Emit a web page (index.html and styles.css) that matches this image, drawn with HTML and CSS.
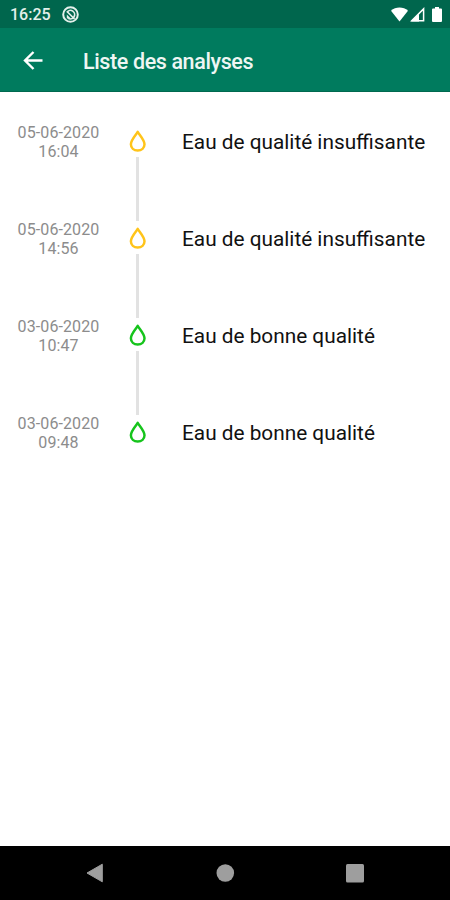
FILE: index.html
```html
<!DOCTYPE html>
<html lang="fr">
<head>
  <meta charset="UTF-8" />
  <meta name="viewport" content="width=device-width, initial-scale=1.0"/>
  <title>Liste des analyses</title>
  <link rel="stylesheet" href="styles.css">
</head>
<body>

  <!-- Status bar -->
  <div class="status-bar">
    <span class="clock">16:25</span>
    <svg class="app-icon" width="18" height="18" viewBox="0 0 18 18" fill="none" stroke="#e3f0eb">
      <circle cx="8.5" cy="8.5" r="7.3" stroke-width="2"/>
      <path d="M5 6.2A4.2 4.2 0 1 1 6.2 12.2" stroke-width="1.7"/>
      <path d="M5 5.5l7.5 7.5" stroke-width="1.7"/>
      <path d="M4.8 8.5v4h4z" fill="#e3f0eb" stroke="none"/>
    </svg>
    <div class="status-icons">
      <svg width="17" height="15" viewBox="0 0 17 15" fill="#fff">
        <path d="M0 3.8C4.6 -.6 12.4 -.6 17 3.8L8.5 14.4z"/>
      </svg>
      <svg width="15" height="15" viewBox="0 0 15 15">
        <path d="M1.7 13.8L13.6 1.9V13.8z" fill="none" stroke="#fff" stroke-width="1.5"/>
        <path d="M1 14.5L9 6.5V14.5z" fill="#fff"/>
      </svg>
      <svg class="battery" width="10" height="15" viewBox="0 0 10 15" fill="#fff">
        <path d="M3 0h4v1.6h2q1 0 1 1V14q0 1-1 1H1q-1 0-1-1V2.6q0-1 1-1h2z"/>
      </svg>
    </div>
  </div>

  <!-- App bar -->
  <header>
    <svg width="20" height="20" viewBox="0 0 20 20" fill="none" stroke="#fff" stroke-width="2.4">
      <path d="M19.5 10.5H2.5M10.5 2L2 10.5L10.5 19"/>
    </svg>
    <h1>Liste des analyses</h1>
  </header>

  <!-- Timeline -->
  <main>
    <svg class="symbols" width="0" height="0">
      <symbol id="drop" viewBox="0 0 18 24">
        <path d="M8.7 2.9C6.6 6.3 1.9 11 1.9 15.2C1.9 19 4.9 21.5 8.7 21.5S15.5 19 15.5 15.2C15.5 11 10.8 6.3 8.7 2.9z" fill="none" stroke="currentColor" stroke-width="2.5" stroke-linejoin="round"/>
      </symbol>
    </svg>
    <ul class="timeline">
      <li>
        <div class="date">05-06-2020<br>16:04</div>
        <div class="marker bad"><svg width="18" height="24"><use href="#drop"/></svg></div>
        <div class="label">Eau de qualité insuffisante</div>
      </li>
      <li>
        <div class="date">05-06-2020<br>14:56</div>
        <div class="marker bad"><svg width="18" height="24"><use href="#drop"/></svg></div>
        <div class="label">Eau de qualité insuffisante</div>
      </li>
      <li>
        <div class="date">03-06-2020<br>10:47</div>
        <div class="marker good"><svg width="18" height="24"><use href="#drop"/></svg></div>
        <div class="label">Eau de bonne qualité</div>
      </li>
      <li>
        <div class="date">03-06-2020<br>09:48</div>
        <div class="marker good"><svg width="18" height="24"><use href="#drop"/></svg></div>
        <div class="label">Eau de bonne qualité</div>
      </li>
    </ul>
  </main>

  <!-- Navigation bar -->
  <nav>
    <svg width="20" height="20" viewBox="0 0 20 20"><path d="M2 10L17.3 1.2V18.8z" stroke="#9e9e9e" stroke-width="1" stroke-linejoin="round"/></svg>
    <svg width="20" height="20" viewBox="0 0 20 20"><circle cx="10.3" cy="10" r="8.8"/></svg>
    <svg width="20" height="20" viewBox="0 0 20 20"><rect x="1" y="1" width="18" height="18.5" rx="1.5"/></svg>
  </nav>

</body>
</html>
```
FILE: styles.css
```css
:root {
  --primary: #007b5e;
  --primary-dark: #00664d;
  --bad: #ffc41a;
  --good: #16c41c;
}

body {
  margin: 0;
  font-family: Roboto, sans-serif;
  background: #fff;
  display: flex;
  flex-direction: column;
  height: 100vh;
}

.status-bar {
  display: flex;
  align-items: center;
  height: 28px;
  box-sizing: border-box;
  padding: 1px 8px 0 10px;
  background: var(--primary-dark);
}

.clock {
  width: 52px;
  font-size: 16px;
  font-weight: 500;
  line-height: 28px;
  padding-top: 1px;
  color: #e3f0eb;
}

.status-icons {
  display: flex;
  margin-left: auto;
  gap: 2px;
}

.battery {
  margin-left: 5px;
}

header {
  display: flex;
  align-items: center;
  height: 64px;
  box-sizing: border-box;
  padding: 0 23px;
  gap: 40px;
  background: var(--primary);
  border-bottom: 1px solid #00694f;
}

header h1 {
  margin: 0;
  padding-top: 3px;
  font-size: 21.5px;
  font-weight: 500;
  letter-spacing: -0.38px;
  color: #eef6f3;
}

main {
  flex-grow: 1;
}

.symbols {
  display: block;
}

.timeline {
  list-style: none;
  margin: 0;
  padding: 32px 0 0;
}

.timeline li {
  display: grid;
  grid-template-columns: 117px 41px 1fr;
  height: 97px;
}

.date {
  margin-top: -1px;
  font-size: 16px;
  line-height: 19px;
  letter-spacing: 0.1px;
  text-align: center;
  color: #8c8c8c;
}

.marker {
  display: flex;
  flex-direction: column;
  align-items: center;
}

.marker svg {
  margin: 5px 0 4px;
  flex-shrink: 0;
}

.marker::after {
  content: "";
  width: 3px;
  height: 64px;
  background: #e2e2e2;
}

.timeline li:last-child .marker::after {
  display: none;
}

.bad {
  color: var(--bad);
}

.good {
  color: var(--good);
}

.label {
  padding: 1px 0 0 24px;
  font-size: 20.8px;
  line-height: 34px;
  color: #111;
  white-space: nowrap;
}

nav {
  display: flex;
  align-items: center;
  justify-content: space-between;
  height: 54px;
  box-sizing: border-box;
  padding: 0 85px;
  background: #000;
  fill: #9e9e9e;
}
```
